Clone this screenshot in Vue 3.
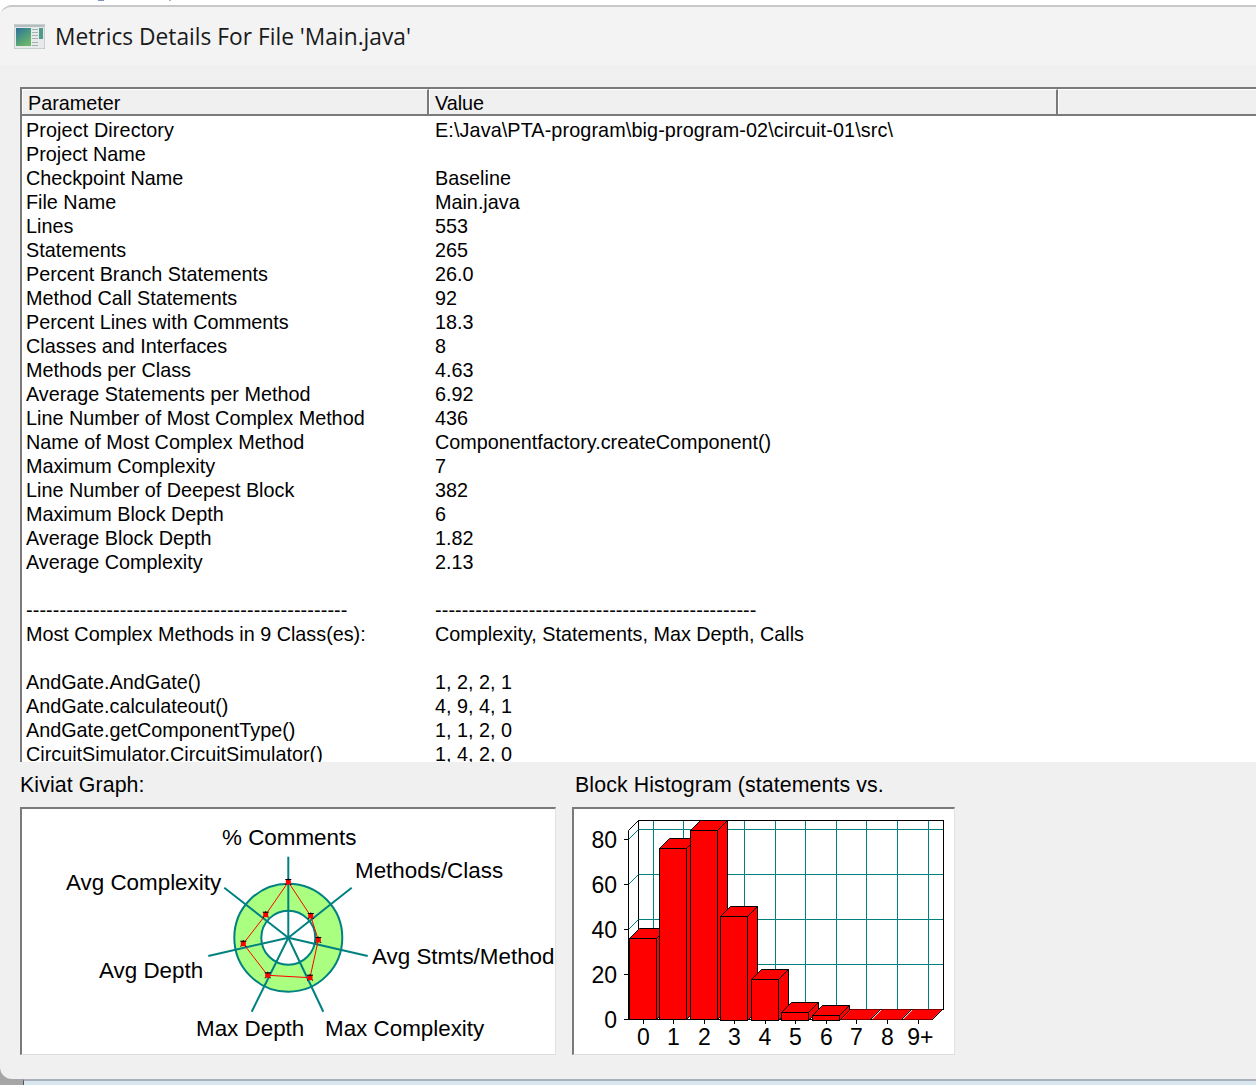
<script setup>
const rows = [
  ['Project Directory', 'E:\\Java\\PTA-program\\big-program-02\\circuit-01\\src\\'],
  ['Project Name', ''],
  ['Checkpoint Name', 'Baseline'],
  ['File Name', 'Main.java'],
  ['Lines', '553'],
  ['Statements', '265'],
  ['Percent Branch Statements', '26.0'],
  ['Method Call Statements', '92'],
  ['Percent Lines with Comments', '18.3'],
  ['Classes and Interfaces', '8'],
  ['Methods per Class', '4.63'],
  ['Average Statements per Method', '6.92'],
  ['Line Number of Most Complex Method', '436'],
  ['Name of Most Complex Method', 'Componentfactory.createComponent()'],
  ['Maximum Complexity', '7'],
  ['Line Number of Deepest Block', '382'],
  ['Maximum Block Depth', '6'],
  ['Average Block Depth', '1.82'],
  ['Average Complexity', '2.13'],
  ['', ''],
  ['-'.repeat(48), '-'.repeat(48)],
  ['Most Complex Methods in 9 Class(es):', 'Complexity, Statements, Max Depth, Calls'],
  ['', ''],
  ['AndGate.AndGate()', '1, 2, 2, 1'],
  ['AndGate.calculateout()', '4, 9, 4, 1'],
  ['AndGate.getComponentType()', '1, 1, 2, 0'],
  ['CircuitSimulator.CircuitSimulator()', '1, 4, 2, 0'],
]

const cx = 267.3, cy = 129.7
const spokes = [[267.3, 48.7], [330.7, 79.7], [346.7, 148], [302.3, 203.7], [230.7, 203.7], [187.3, 148], [203.3, 79.7]]
const pts = [[267.3, 74], [289.7, 108], [297.3, 132], [289, 169.7], [246.7, 167.3], [222.3, 135.7], [244.7, 106.7]]
const polyPts = pts.map(p => p.join(',')).join(' ')
const kivLabels = [
  ['% Comments', 201, 37], ['Methods/Class', 334, 70], ['Avg Complexity', 45, 82], ['Avg Stmts/Method', 351, 156],
  ['Avg Depth', 78, 170], ['Max Depth', 175, 228], ['Max Complexity', 304, 228],
]

// Histogram: coordinates relative to (573, 808)
const ox = 573, oy = 808
const gridV = [653.3, 683.3, 714, 744.3, 775.3, 805.3, 836.3, 866.3, 897.3, 928.3].map(x => x - ox)
const gridY = [0, 20, 40, 60, 80].map(v => ({ v, y: 1019.5 - oy - v * 2.25 }))
const bars = [
  [629.5, 656.5, 938.5], [659.5, 686.5, 848.5], [690.5, 717.5, 830.5], [720.5, 747.5, 916.5],
  [751.5, 778.5, 979.5], [781.5, 808.5, 1012.5], [812.5, 839.5, 1015.5],
].map(([a, b, t], i) => ({ x: a - ox, w: b - a, y: t - oy, h: (i > 2 ? 1020.5 : 1019.5) - t }))
const flats = [842, 873, 904].map(x => x - ox)
const ticks = [643.3, 673.3, 704.3, 734.3, 765, 795.3, 826.3, 856.3, 887.3, 918.3].map(x => x - ox)
const xLabels = ['0', '1', '2', '3', '4', '5', '6', '7', '8', '9+']
</script>

<template>
  <div class="page">
    <div class="top-strip"></div>
    <div class="window">
      <header class="titlebar">
        <svg class="app-icon" width="31" height="25" viewBox="0 0 31 25">
          <defs>
            <linearGradient id="ig" x1="0" y1="0" x2="0.6" y2="1">
              <stop offset="0" stop-color="#2f6f9c" />
              <stop offset="0.55" stop-color="#4a9a80" />
              <stop offset="1" stop-color="#6cb56a" />
            </linearGradient>
          </defs>
          <rect x="0" y="0" width="31" height="25" fill="#e6eaea" />
          <rect x="0" y="0" width="31" height="25" fill="none" stroke="#aab4b4" />
          <rect x="1" y="1" width="29" height="2" fill="#b4bebe" />
          <rect x="2" y="4" width="15" height="18" fill="url(#ig)" />
          <g fill="#a8b0b0">
            <rect x="18" y="5" width="6" height="1" />
            <rect x="18" y="8" width="6" height="1" />
            <rect x="18" y="11" width="6" height="1" />
            <rect x="18" y="14" width="6" height="1" />
            <rect x="18" y="18" width="6" height="1" />
            <rect x="18" y="21" width="6" height="1" />
          </g>
          <rect x="25" y="4" width="4" height="11" fill="#4f9a88" />
        </svg>
        <span class="title">Metrics Details For File 'Main.java'</span>
      </header>

      <main class="body">
        <section class="table">
          <div class="thead">
            <div class="th th-a">Parameter</div>
            <div class="th th-b">Value</div>
            <div class="th th-c"></div>
          </div>
          <div class="tbody">
            <div v-for="(r, i) in rows" :key="i" class="tr" :class="{ loose: i === 0 || i === 20 }">
              <div class="td-a">{{ r[0] }}</div>
              <div class="td-b">{{ r[1] }}</div>
            </div>
          </div>
        </section>

        <section class="charts">
          <div class="chart chart-k">
            <div class="chart-label">Kiviat Graph:</div>
            <div class="panel panel-k">
              <svg width="533" height="245" viewBox="1 1 533 245">
                <g fill="none" stroke="#008080" stroke-width="2">
                  <circle :cx="cx" :cy="cy" r="54" fill="#aaff80" />
                  <circle :cx="cx" :cy="cy" r="27" fill="#fff" />
                  <line v-for="(s, i) in spokes" :key="i" :x1="cx" :y1="cy" :x2="s[0]" :y2="s[1]" />
                </g>
                <polygon :points="polyPts" fill="none" stroke="#f00" stroke-width="1" />
                <g v-for="(p, i) in pts" :key="'p' + i">
                  <rect :x="p[0] - 2.5" :y="p[1] - 2.5" width="5" height="5" fill="#f00" />
                  <path :d="`M${p[0] - 3} ${p[1] - 2.5}h6M${p[0]} ${p[1] - 3.5}v2M${p[0] - 3} ${p[1] + 2.5}h1M${p[0] + 2} ${p[1] + 2.5}h1`" stroke="#000" stroke-width="1" />
                </g>
                <text v-for="l in kivLabels" :key="l[0]" :x="l[1]" :y="l[2]" class="svg-text">{{ l[0] }}</text>
              </svg>
            </div>
          </div>

          <div class="chart chart-h">
            <div class="chart-label">Block Histogram (statements vs.</div>
            <div class="panel panel-h">
              <svg width="380" height="245" viewBox="1 1 380 245">
                <rect x="65.5" y="12.5" width="305" height="189" fill="#fff" stroke="#000" />
                <g stroke="#008080" stroke-width="1">
                  <line v-for="x in gridV" :key="x" :x1="Math.round(x) + 0.5" y1="13" :x2="Math.round(x) + 0.5" y2="201" />
                  <template v-for="g in gridY" :key="g.v">
                    <line v-if="g.v" x1="66" :y1="g.y - 10" x2="370" :y2="g.y - 10" />
                    <line v-if="g.v" x1="55.5" :y1="g.y" x2="65.5" :y2="g.y - 10" />
                  </template>
                </g>
                <path d="M55.5 22.5V211.5M55.5 22.5L65.5 12.5M55.5 211.5L65.5 201.5" fill="none" stroke="#000" />
                <g stroke="#000" stroke-width="1">
                  <line v-for="g in gridY" :key="'yt' + g.v" x1="51" :y1="g.y" x2="55.5" :y2="g.y" />
                  <line v-for="t in ticks" :key="t" :x1="Math.round(t) + 0.5" y1="211" :x2="Math.round(t) + 0.5" y2="216" />
                  <line x1="55" y1="211.5" x2="360" y2="211.5" />
                </g>
                <g stroke="#000" stroke-width="1" fill="#f00">
                  <g v-for="(b, i) in bars" :key="'b' + i">
                    <path :d="`M${b.x + b.w} ${b.y}l10 -10v${b.h}l-10 10z`" />
                    <path :d="`M${b.x} ${b.y}l10 -10h${b.w}l-10 10z`" />
                    <rect :x="b.x" :y="b.y" :width="b.w" :height="b.h" />
                  </g>
                </g>
                <g v-for="x in flats" :key="'f' + x">
                  <path :d="`M${x - 1} 211.5L${x + 9} 201.5H${x + 38}L${x + 28} 211.5z`" fill="#f00" />
                  <path :d="`M${x + 28.5} 211.5l10 -10`" stroke="#000" fill="none" />
                </g>
                <text v-for="g in gridY" :key="'yl' + g.v" x="44" :y="g.y + 8.5" text-anchor="end" class="svg-text num">{{ g.v }}</text>
                <text v-for="(t, i) in ticks" :key="'xl' + i" :x="i === 9 ? t + 2 : t" y="237" text-anchor="middle" class="svg-text num">{{ xLabels[i] }}</text>
              </svg>
            </div>
          </div>
        </section>
      </main>
    </div>
    <div class="behind"></div>
  </div>
</template>

<style scoped>
.page {
  width: 1256px;
  height: 1085px;
  overflow: hidden;
  background: linear-gradient(#fff 0 1050px, #a6a6a6 1050px);
  font-family: "Liberation Sans", Arial, sans-serif;
  color: #000;
}
.top-strip {
  height: 5px;
  background:
    linear-gradient(#7f8fc4, #7f8fc4) 98px 0 / 6px 1px no-repeat,
    linear-gradient(#a8b4d8, #a8b4d8) 169px 0 / 2px 1px no-repeat;
}
.window {
  height: 1074px;
  box-sizing: border-box;
  border-top: 2px solid #c8c8c8;
  border-top-left-radius: 12px;
  border-bottom-left-radius: 12px;
  background: #f0f0f0;
  overflow: hidden;
  display: flex;
  flex-direction: column;
}
.titlebar {
  height: 58px;
  flex: none;
  background: #f3f3f3;
  display: flex;
  align-items: center;
  padding-left: 14px;
  gap: 10px;
  box-sizing: border-box;
}
.app-icon {
  flex: none;
  margin-top: 1px;
}
.title {
  font-family: "Open Sans", sans-serif;
  font-size: 22.75px;
  color: #1a1a1a;
}
.body {
  flex: 1;
  display: flex;
  flex-direction: column;
  padding-top: 22px;
  min-height: 0;
}
.table {
  margin-left: 20px;
  height: 675px;
  flex: none;
  border-top: 2px solid #7a7a7a;
  border-left: 2px solid #7a7a7a;
  box-sizing: border-box;
  overflow: hidden;
  background: #fff;
}
.thead {
  display: flex;
  height: 25px;
  background: #f0f0f0;
  border-bottom: 2px solid #7a7a7a;
  font-size: 19.8px;
}
.th {
  box-sizing: border-box;
  height: 25px;
  border-top: 1px solid #fff;
  border-left: 1px solid #fff;
  border-right: 2px solid #7a7a7a;
  padding-left: 5px;
  line-height: 27px;
}
.th-a { width: 407px; }
.th-b { width: 629px; }
.th-c { flex: 1; border-right: none; }
.tbody {
  font-size: 19.8px;
  padding-top: 2px;
}
.tr {
  display: flex;
  height: 24px;
  line-height: 24px;
  white-space: pre;
}
.loose {
  letter-spacing: 0.11px;
}
.td-a {
  width: 409px;
  padding-left: 4px;
  box-sizing: border-box;
}
.td-b {
  flex: 1;
  padding-left: 4px;
}
.charts {
  display: flex;
  padding-left: 20px;
  flex: 1;
}
.chart-k { width: 552px; }
.chart-h { width: 384px; }
.chart-label {
  height: 45px;
  line-height: 46px;
  font-size: 21.33px;
  letter-spacing: 0.1px;
}
.chart-h .chart-label { padding-left: 3px; }
.panel {
  height: 248px;
  box-sizing: border-box;
  background: #fff;
  border-top: 2px solid #7a7a7a;
  border-left: 2px solid #7a7a7a;
  border-right: 1px solid #e2e2e2;
  border-bottom: 1px solid #dcdcdc;
  overflow: hidden;
}
.panel svg { display: block; }
.panel-k { width: 536px; }
.panel-h { width: 383px; }
.svg-text {
  font-family: "Liberation Sans", Arial, sans-serif;
  font-size: 22.4px;
  fill: #000;
}
.num {
  font-size: 23px;
}
.behind {
  height: 6px;
  margin-left: 23px;
  box-sizing: border-box;
  background: #d8e6f0;
  border-top: 2px solid #a8b0bc;
  border-left: 1px solid #555;
}
</style>
